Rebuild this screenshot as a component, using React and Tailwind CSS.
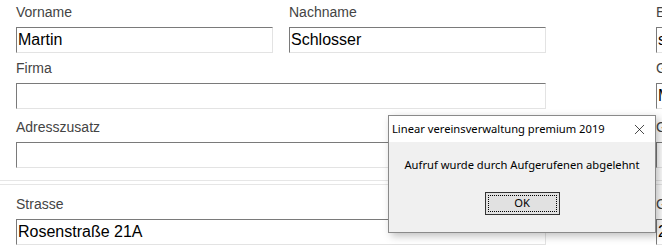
import { X } from "lucide-react";

const Field = ({ label, value, className = "" }) => (
    <div className={`flex flex-col ${className}`}>
        <span className="text-[14px] leading-4 text-[#444] whitespace-nowrap">{label}</span>
        <div className="mt-[7px] h-[26px] border border-t-[#7a7a7a] border-l-[#7a7a7a] border-r-[#e3e3e3] border-b-[#e3e3e3] bg-white px-[1px] text-[16px] leading-[24px] text-black whitespace-nowrap overflow-hidden">
            {value}
        </div>
    </div>
);

export default function App() {
    return (
        <div className="relative w-[662px] h-[250px] bg-white overflow-hidden font-['Liberation_Sans',Arial,sans-serif]">
            {/* Upper block */}
            <div className="flex pl-4 pt-[4px]">
                <div className="w-[530px] shrink-0 flex flex-col">
                    <div className="grid grid-cols-2 gap-4">
                        <Field label="Vorname" value="Martin" />
                        <Field label="Nachname" value="Schlosser" />
                    </div>
                    <Field label="Firma" value="" className="mt-[7px]" />
                    <Field label="Adresszusatz" value="" className="mt-[10px]" />
                </div>
                <div className="ml-[110px] w-[257px] shrink-0 flex flex-col">
                    <Field label="E-Mail" value="schlosser@web.de" />
                    <Field label="Geschlecht" value="Männlich" className="mt-[7px]" />
                    <Field label="Geburtsdatum" value="" className="mt-[10px]" />
                </div>
            </div>

            {/* Separator */}
            <div className="mt-[12px] h-[5px] border-t border-b border-[#e6e6e6]" />

            {/* Lower block */}
            <div className="flex pl-4 pt-[11px]">
                <Field label="Strasse" value="Rosenstraße 21A" className="w-[530px] shrink-0" />
                <Field label="Geändert am" value="21.03.2019" className="ml-[110px] w-[257px] shrink-0" />
            </div>

            {/* Message box */}
            <div className="absolute left-[388px] top-[115px] w-[268px] h-[118px] border border-[#8a8a8a] bg-[#f0f0f0] shadow-[3px_3px_8px_rgba(0,0,0,0.25)] flex flex-col font-['Noto_Sans','Open_Sans',sans-serif]">
                <div className="h-[26px] bg-white flex items-center justify-between pl-[3px] pr-[7px]">
                    <span className="text-[11.2px] text-black">Linear vereinsverwaltung premium 2019</span>
                    <X className="w-[17px] h-[17px] text-black" strokeWidth={1} />
                </div>
                <div className="flex flex-col items-center pt-[15px]">
                    <p className="text-[11.2px] text-black">Aufruf wurde durch Aufgerufenen abgelehnt</p>
                    <button className="mt-[18px] w-[75px] h-[23px] border border-[#333] bg-[#e1e1e1] p-[2px]">
                        <span className="flex h-full w-full items-center justify-center border border-dotted border-black text-[11.2px] text-black">
                            OK
                        </span>
                    </button>
                </div>
            </div>
        </div>
    );
}
